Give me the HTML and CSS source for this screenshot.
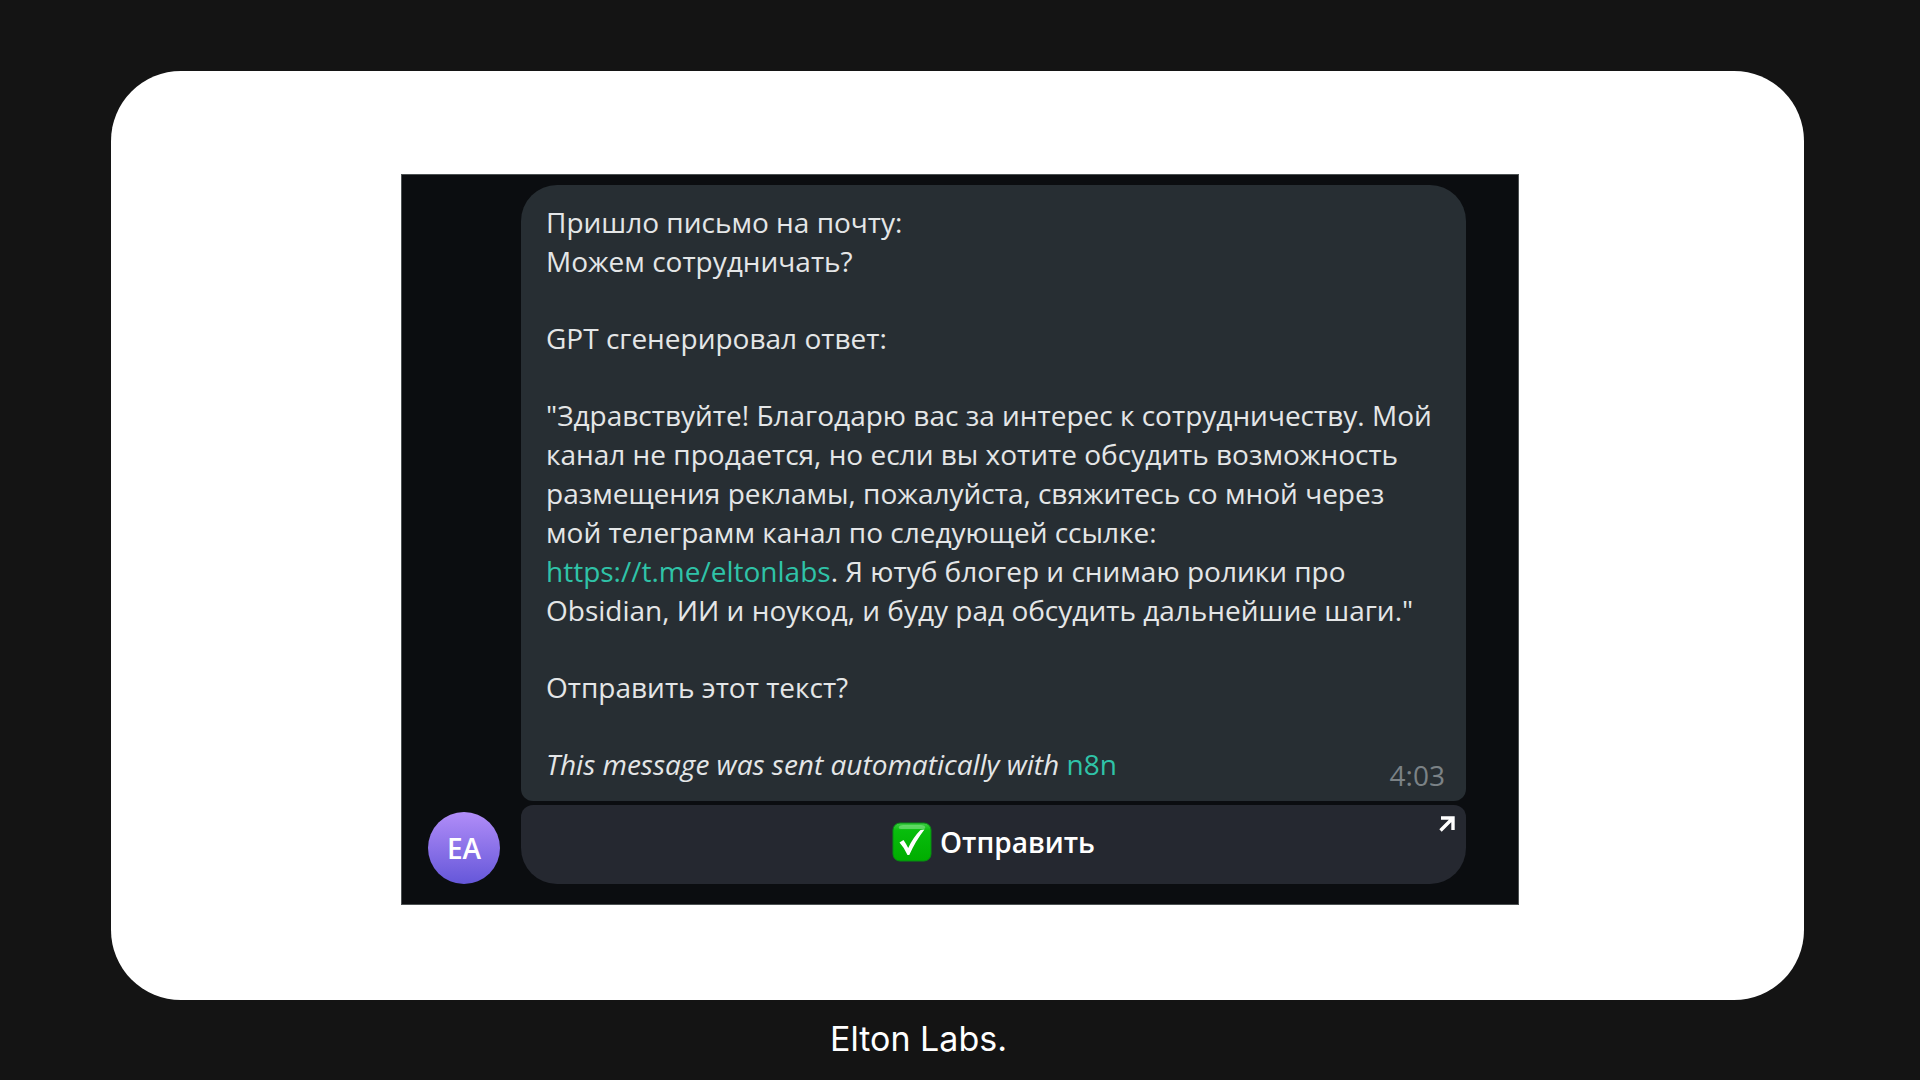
FILE: index.html
```html
<!DOCTYPE html>
<html lang="ru">
<head>
<meta charset="utf-8">
<meta name="viewport" content="width=device-width, initial-scale=1">
<title>Elton Labs.</title>
<link rel="stylesheet" href="styles.css">
</head>
<body>
<main class="card">
  <section class="chat">
    <div class="avatar" aria-hidden="true">EA</div>
    <div class="thread">
      <article class="bubble">
        <p>Пришло письмо на почту:<br>Можем сотрудничать?</p>
        <p>GPT сгенерировал ответ:</p>
        <p>"Здравствуйте! Благодарю вас за интерес к сотрудничеству. Мой канал не продается, но если вы хотите обсудить возможность размещения рекламы, пожалуйста, свяжитесь со мной через мой телеграмм канал по следующей ссылке:<br><a href="https://t.me/eltonlabs">https://t.me/eltonlabs</a>. Я ютуб блогер и снимаю ролики про Obsidian, ИИ и ноукод, и буду рад обсудить дальнейшие шаги."</p>
        <p>Отправить этот текст?</p>
        <div class="signature">
          <p><em>This message was sent automatically with</em> <a href="https://n8n.io">n8n</a></p>
          <time class="time" datetime="04:03">4:03</time>
        </div>
      </article>
      <button class="send" type="button">
        <svg class="check" viewBox="0 0 40 40" aria-hidden="true">
          <defs>
            <linearGradient id="green" x1="0" y1="0" x2="0" y2="1">
              <stop offset="0" stop-color="#3fce45"/>
              <stop offset=".2" stop-color="#08bd0c"/>
              <stop offset="1" stop-color="#00ad00"/>
            </linearGradient>
          </defs>
          <rect x="1" y="1" width="38" height="38" rx="7" fill="url(#green)" stroke="#078c12" stroke-width="1"/>
          <path d="M7 4.500Q8 3 11 3H29Q32 3 33 4.500Q34 7 31 7H9Q6 7 7 4.500Z" fill="#76e07a" opacity=".7"/>
          <path d="M7.500 20.500L11.500 18Q14 21.500 16.200 26Q21 15.500 28.500 8L32.500 7.500Q23.500 19 17.300 33H15.500Q12.500 26 7.500 20.500Z" fill="#fff"/>
        </svg>
        <span>Отправить</span>
        <svg class="arrow" viewBox="0 0 16 16" aria-hidden="true">
          <path d="M2 2H14V14M14 2L1.500 14.500" fill="none" stroke="#fff" stroke-width="3.400"/>
        </svg>
      </button>
    </div>
  </section>
</main>
<footer class="brand">Elton Labs.</footer>
</body>
</html>
```
FILE: styles.css
```css
* {
  box-sizing: border-box;
}

body {
  margin: 0;
  min-height: 100vh;
  padding: 71px 116px 0 111px;
  background: #141414;
  font-family: "Open Sans", "Noto Sans", sans-serif;
}

.card {
  padding: 103px 285px 95px 290px;
  border-radius: 70px;
  background: #fff;
}

.chat {
  display: flex;
  align-items: flex-end;
  gap: 21px;
  padding: 10px 52px 20px 26px;
  border: 1px solid #4c5152;
  background: #0b0d10;
}

.avatar {
  flex: none;
  width: 72px;
  height: 72px;
  border-radius: 50%;
  background: linear-gradient(#b18df8, #6557d9);
  color: #fff;
  font-size: 28px;
  font-weight: 600;
  line-height: 73px;
  text-align: center;
}

.thread {
  flex: 1;
  display: flex;
  flex-direction: column;
  gap: 4px;
  min-width: 0;
}

.bubble {
  display: flex;
  flex-direction: column;
  gap: 38px;
  padding: 18px 21px 6px 25px;
  border-radius: 36px 36px 12px 12px;
  background: #272e33;
  color: #e4e6e7;
  font-size: 28px;
  line-height: 39px;
}

.bubble p {
  margin: 0;
}

.bubble a {
  color: #2fc3a8;
  text-decoration: none;
}

.signature {
  display: flex;
  align-items: flex-end;
  justify-content: space-between;
}

.signature p {
  padding-bottom: 11px;
}

.time {
  color: #7b8286;
}

.send {
  position: relative;
  display: flex;
  align-items: center;
  justify-content: center;
  gap: 8px;
  height: 79px;
  padding: 0 0 5px;
  border: 0;
  border-radius: 12px 12px 36px 36px;
  background: #252830;
  color: #fff;
  font: 600 28px/39px "Open Sans", "Noto Sans", sans-serif;
}

.check {
  width: 40px;
  height: 40px;
}

.arrow {
  position: absolute;
  top: 11px;
  right: 11px;
  width: 16px;
  height: 16px;
}

.brand {
  padding: 19px 78px 0 0;
  color: #fff;
  font: 400 34px/40px Inter, "Open Sans", sans-serif;
  text-align: center;
}
```
